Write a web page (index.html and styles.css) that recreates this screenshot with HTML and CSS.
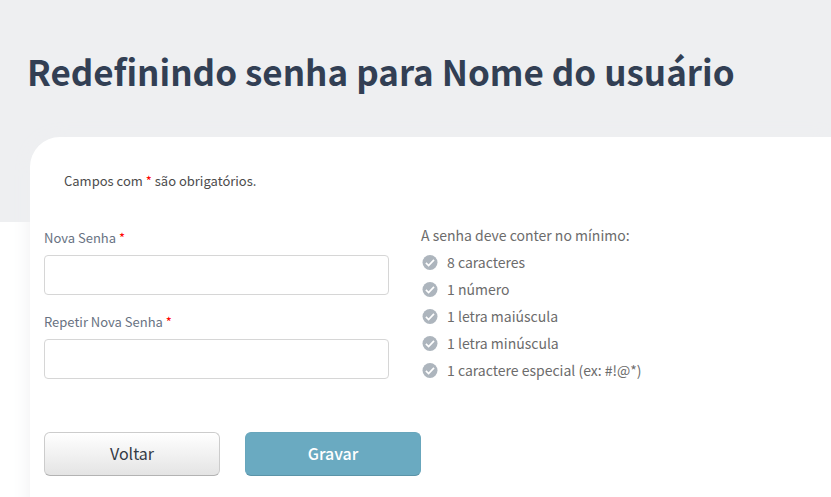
FILE: index.html
```html
<!DOCTYPE html>
<html lang="pt-BR">
<head>
    <meta charset="UTF-8">
    <meta name="viewport" content="width=device-width, initial-scale=1.0">
    <title>Redefinir senha</title>
    <link rel="stylesheet" href="styles.css">
</head>
<body>
    <svg width="0" height="0" class="sprite" aria-hidden="true">
        <symbol id="icon-check" viewBox="0 0 16 16">
            <circle cx="8" cy="7.5" r="7.5" fill="#adb5bd"/>
            <path d="M3.9 7.9l2.7 2.6 5.4-5.6" fill="none" stroke="#ffffff" stroke-width="1.7"/>
        </symbol>
    </svg>
    <header class="page-header">
        <h1>Redefinindo senha para Nome do usuário</h1>
    </header>
    <main class="card">
        <p class="required-note">Campos com <span class="required">*</span> são obrigatórios.</p>
        <form id="reset-form">
            <div class="form-row">
                <div class="fields">
                    <div class="form-group">
                        <label for="new-password">Nova Senha <span class="required">*</span></label>
                        <input type="password" id="new-password" name="new-password" required>
                    </div>
                    <div class="form-group">
                        <label for="confirm-password">Repetir Nova Senha <span class="required">*</span></label>
                        <input type="password" id="confirm-password" name="confirm-password" required>
                    </div>
                </div>
                <div class="rules">
                    <p>A senha deve conter no mínimo:</p>
                    <ul>
                        <li><svg class="icon"><use href="#icon-check"/></svg>8 caracteres</li>
                        <li><svg class="icon"><use href="#icon-check"/></svg>1 número</li>
                        <li><svg class="icon"><use href="#icon-check"/></svg>1 letra maiúscula</li>
                        <li><svg class="icon"><use href="#icon-check"/></svg>1 letra minúscula</li>
                        <li><svg class="icon"><use href="#icon-check"/></svg>1 caractere especial (ex: #!@*)</li>
                    </ul>
                </div>
            </div>
            <div class="actions">
                <button type="button" class="btn btn-default">Voltar</button>
                <button type="submit" class="btn btn-primary">Gravar</button>
            </div>
        </form>
    </main>
</body>
</html>
```
FILE: styles.css
```css
* {
    box-sizing: border-box;
}
body {
    font-family: "Noto Sans CJK JP", sans-serif;
    background-color: #ffffff;
    color: #6c6c6c;
    margin: 0;
    overflow-x: hidden;
}
.sprite {
    position: absolute;
}
.page-header {
    background-color: #eeeff1;
    padding: 46px 27px 126px;
}
.page-header h1 {
    margin: 0;
    color: #323f54;
    font-size: 35px;
    line-height: 50px;
}
.card {
    margin: -85px 0 0 30px;
    padding: 32px 14px 48px;
    background-color: #ffffff;
    border-radius: 30px 0 0 0;
    box-shadow: 0 0 20px #eeeff1;
}
.required-note {
    margin: 0 0 29px;
    padding: 0 20px;
    color: #4c4c4c;
    font-size: 13px;
    line-height: 24px;
}
.required {
    color: #ff0000;
}
.form-row {
    display: flex;
    gap: 32px;
    margin-bottom: 38px;
}
.fields {
    flex: 0 1 345px;
    padding-top: 4px;
}
.form-group {
    margin-bottom: 15px;
}
.form-group label {
    display: block;
    margin-bottom: 5px;
    color: #687282;
    font-size: 13px;
    line-height: 24px;
}
.form-group input {
    display: block;
    width: 100%;
    height: 40px;
    padding: 8px 12px;
    border: 1px solid #d6d6d6;
    border-radius: 4px;
    font-size: 14px;
}
.form-group input:focus {
    border-color: #6aaac1;
    outline: none;
}
.rules {
    font-size: 14px;
    line-height: 27px;
}
.rules p {
    margin: 0;
}
.rules ul {
    list-style: none;
    margin: 0;
    padding: 0;
}
.rules li {
    display: flex;
    align-items: center;
}
.icon {
    width: 16px;
    height: 16px;
    margin: 0 9px 0 1px;
}
.actions {
    display: flex;
    gap: 25px;
}
.btn {
    width: 176px;
    height: 44px;
    padding: 0 12px 2px;
    border: 1px solid #cccccc;
    border-radius: 6px;
    font-family: inherit;
    font-size: 16px;
    cursor: pointer;
}
.btn-default {
    background: linear-gradient(#ffffff, #e4e4e4);
    border-bottom-color: #b3b3b3;
    color: #333a45;
}
.btn-primary {
    background-color: #6aaac1;
    border-color: #68a6bc;
    border-bottom-color: #5b94a8;
    color: #ffffff;
    font-weight: 500;
}
```
